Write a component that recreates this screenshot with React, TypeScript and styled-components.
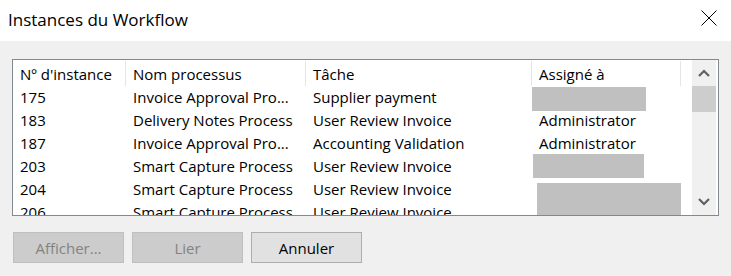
import React from "react";
import styled, { createGlobalStyle } from "styled-components";

const GlobalStyle = createGlobalStyle`
  html, body {
    margin: 0;
    padding: 0;
    background: #f0f0f0;
  }
  * {
    box-sizing: border-box;
  }
`;

const FONT = `"Segoe UI", "Open Sans", "Noto Sans", sans-serif`;

interface IRow {
  id: string;
  process: string;
  task: string;
  user?: string;
  redact?: { left: number; top: number; width: number; height: number };
}

const rows: IRow[] = [
  {
    id: "175",
    process: "Invoice Approval Pro...",
    task: "Supplier payment",
    redact: { left: 0, top: 1, width: 114, height: 24 },
  },
  { id: "183", process: "Delivery Notes Process", task: "User Review Invoice", user: "Administrator" },
  { id: "187", process: "Invoice Approval Pro...", task: "Accounting Validation", user: "Administrator" },
  {
    id: "203",
    process: "Smart Capture Process",
    task: "User Review Invoice",
    redact: { left: 1, top: -1, width: 111, height: 24 },
  },
  {
    id: "204",
    process: "Smart Capture Process",
    task: "User Review Invoice",
    user: "f",
    redact: { left: 5, top: 5, width: 144, height: 40 },
  },
  { id: "206", process: "Smart Capture Process", task: "User Review Invoice" },
];

const columns = ["Nº d'instance", "Nom processus", "Tâche", "Assigné à"];

function Chevron({ up }: { up?: boolean }) {
  return (
    <svg width="12" height="8" viewBox="0 0 12 8">
      <path
        d={up ? "M1 7 L6 2 L11 7" : "M1 1 L6 6 L11 1"}
        fill="none"
        stroke="#606060"
        strokeWidth="2.2"
      />
    </svg>
  );
}

export default function App() {
  return (
    <Window>
      <GlobalStyle />
      <TitleBar>
        <Title>Instances du Workflow</Title>
        <CloseButton>
          <svg width="16" height="16" viewBox="0 0 16 16">
            <path d="M0.5 0.5 L15.5 15.5 M15.5 0.5 L0.5 15.5" stroke="#000" strokeWidth="1" />
          </svg>
        </CloseButton>
      </TitleBar>
      <Content>
        <ListBox>
          <ListArea>
            <HeaderRow>
              {columns.map((c) => (
                <HeaderCell key={c}>{c}</HeaderCell>
              ))}
              <HeaderCell $last />
            </HeaderRow>
            <Body>
              {rows.map((r) => (
                <Row key={r.id}>
                  <Cell>{r.id}</Cell>
                  <Cell>{r.process}</Cell>
                  <Cell>{r.task}</Cell>
                  <Cell>
                    {r.user}
                    {r.redact && (
                      <Redact
                        style={{
                          left: r.redact.left,
                          top: r.redact.top,
                          width: r.redact.width,
                          height: r.redact.height,
                        }}
                      />
                    )}
                  </Cell>
                  <Cell />
                </Row>
              ))}
            </Body>
          </ListArea>
          <ScrollBar>
            <ScrollButton>
              <Chevron up />
            </ScrollButton>
            <Thumb />
            <Track />
            <ScrollButton>
              <Chevron />
            </ScrollButton>
          </ScrollBar>
        </ListBox>
        <ButtonRow>
          <Button disabled>Afficher...</Button>
          <Button disabled>Lier</Button>
          <Button>Annuler</Button>
        </ButtonRow>
      </Content>
    </Window>
  );
}

const Window = styled.div`
  width: 731px;
  height: 276px;
  background: #f0f0f0;
  font-family: ${FONT};
  display: flex;
  flex-direction: column;
  overflow: hidden;
`;

const TitleBar = styled.div`
  height: 41px;
  background: #ffffff;
  display: flex;
  align-items: center;
  justify-content: space-between;
  padding: 0 14px 2px 8px;
`;

const Title = styled.div`
  font-size: 17px;
  color: #000;
`;

const CloseButton = styled.div`
  width: 16px;
  height: 16px;
  display: flex;
  margin-top: -3px;
`;

const Content = styled.div`
  padding: 18px 12px 0;
  display: flex;
  flex-direction: column;
`;

const ListBox = styled.div`
  height: 157px;
  border: 1px solid #828790;
  background: #ffffff;
  display: flex;
  padding-right: 2px;
`;

const ListArea = styled.div`
  width: 679px;
  display: flex;
  flex-direction: column;
  overflow: hidden;
`;

const gridCols = "113px 180px 226px 149px 1fr";

const HeaderRow = styled.div`
  display: grid;
  grid-template-columns: ${gridCols};
  height: 26px;
  flex-shrink: 0;
`;

const HeaderCell = styled.div<{ $last?: boolean }>`
  font-size: 15px;
  color: #000;
  padding: 0 7px;
  line-height: 26px;
  white-space: nowrap;
  border-right: ${(p) => (p.$last ? "none" : "1px solid #e5e5e5")};
  height: 25px;
  margin-top: 1px;
`;

const Body = styled.div`
  flex: 1;
  overflow: hidden;
`;

const Row = styled.div`
  display: grid;
  grid-template-columns: ${gridCols};
  height: 23px;
`;

const Cell = styled.div`
  position: relative;
  font-size: 15px;
  color: #000;
  padding: 0 7px;
  line-height: 23px;
  white-space: nowrap;
  overflow: visible;
`;

const Redact = styled.div`
  position: absolute;
  background: #c0c0c0;
`;

const ScrollBar = styled.div`
  width: 24px;
  background: #f0f0f0;
  display: flex;
  flex-direction: column;
`;

const ScrollButton = styled.div`
  height: 26px;
  display: flex;
  align-items: center;
  justify-content: center;
  flex-shrink: 0;
`;

const Thumb = styled.div`
  height: 26px;
  background: #cdcdcd;
  flex-shrink: 0;
`;

const Track = styled.div`
  flex: 1;
`;

const ButtonRow = styled.div`
  display: flex;
  gap: 8px;
  margin-top: 16px;
  padding-left: 1px;
`;

const Button = styled.button`
  width: 111px;
  height: 31px;
  font-family: ${FONT};
  font-size: 15px;
  padding: 0;
  border: 1px solid #adadad;
  background: #e1e1e1;
  color: #000;
  &:disabled {
    border-color: #bfbfbf;
    background: #cccccc;
    color: #838383;
  }
`;
